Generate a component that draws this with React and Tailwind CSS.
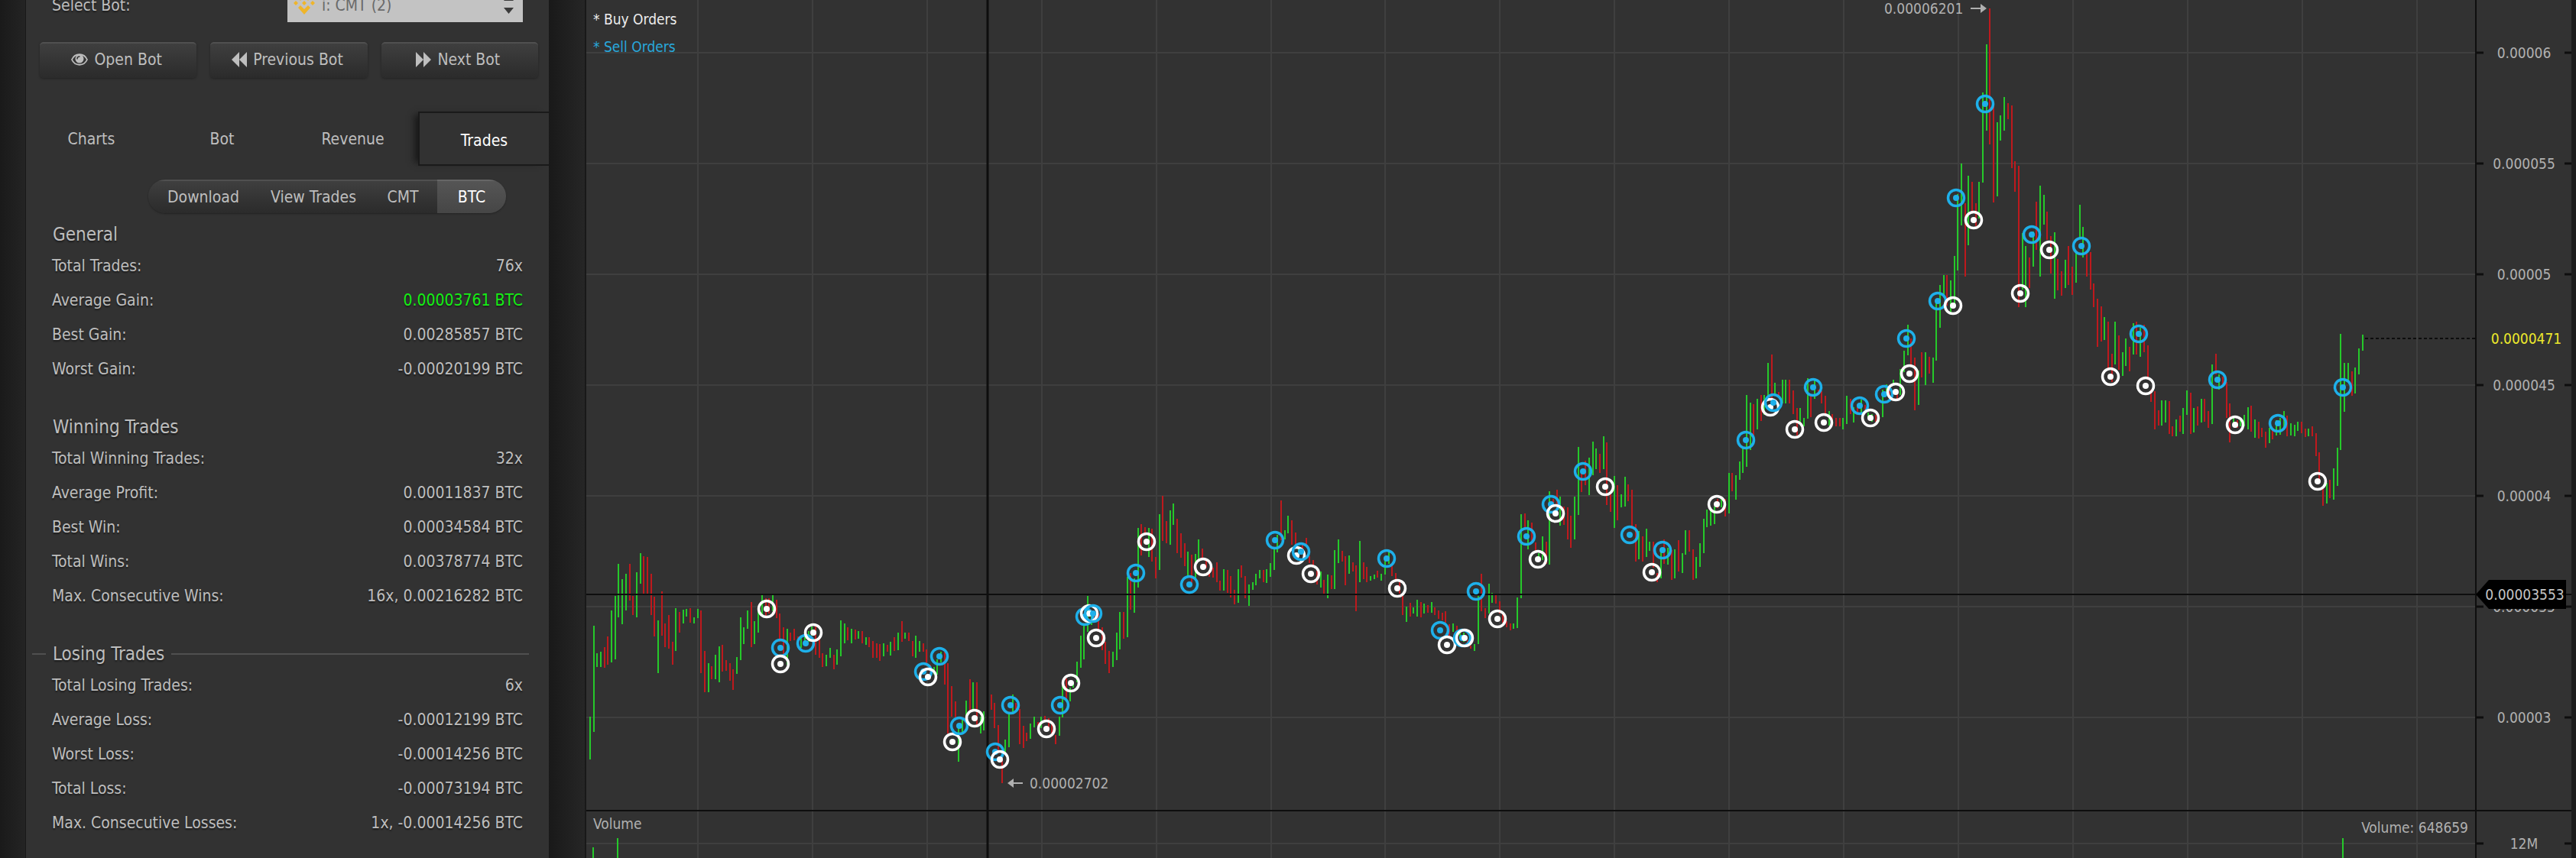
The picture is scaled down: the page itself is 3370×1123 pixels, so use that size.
// src/pages/BotTradesPage.jsx
import { useState } from 'react'

// ─── Sidebar data ─────────────────────────────────────────────────────────────
const TABS = ['Charts', 'Bot', 'Revenue', 'Trades']

const STATS = [
  {
    title: 'General',
    rows: [
      ['Total Trades:', '76x'],
      ['Average Gain:', '0.00003761 BTC', true],
      ['Best Gain:', '0.00285857 BTC'],
      ['Worst Gain:', '-0.00020199 BTC'],
    ],
  },
  {
    title: 'Winning Trades',
    rows: [
      ['Total Winning Trades:', '32x'],
      ['Average Profit:', '0.00011837 BTC'],
      ['Best Win:', '0.00034584 BTC'],
      ['Total Wins:', '0.00378774 BTC'],
      ['Max. Consecutive Wins:', '16x, 0.00216282 BTC'],
    ],
  },
  {
    title: 'Losing Trades',
    ruled: true,
    rows: [
      ['Total Losing Trades:', '6x'],
      ['Average Loss:', '-0.00012199 BTC'],
      ['Worst Loss:', '-0.00014256 BTC'],
      ['Total Loss:', '-0.00073194 BTC'],
      ['Max. Consecutive Losses:', '1x, -0.00014256 BTC'],
    ],
  },
]

// ─── Chart data ───────────────────────────────────────────────────────────────
// One entry per candle: g = up, r = down, then high-low. Ten candles per line.
const CANDLES = `
g938-994 g819-958 g855-873 g853-873 r847-874 r833-870 g799-867 g780-863 g738-808 g758-817
g751-799 r738-786 r780-805 g749-808 g724-764 r728-777 r729-778 r751-805 r781-833 g812-881
r774-832 r816-847 r805-849 r840-870 g796-852 r801-828 g798-816 g797-807 r796-815 g808-816
g797-809 r799-881 r852-906 g868-906 r872-889 g857-889 g846-893 r844-879 r864-878 r868-891
r876-903 g860-882 g808-864 g821-843 g799-823 r788-847 g813-843 g797-828 g779-807 r783-807
r783-803 g779-800 r785-809 r803-840 r821-860 g823-870 r828-839 r823-838 r833-843 g835-848
g833-845 g826-840 g820-832 r820-857 r837-861 r855-873 g857-872 g848-861 r857-876 g850-870
g812-859 g816-842 r821-838 g823-842 r824-837 g826-836 r826-842 g834-844 r834-847 r839-861
r842-861 r843-865 g842-859 r844-853 g840-858 r834-852 g828-851 r813-840 g828-836 r828-839
r839-859 g832-861 g839-853 r842-853 r850-870 r870-880 g873-883 g863-883 g853-867 r853-896
r868-960 r898-938 r918-942 g947-997 g942-960 g917-942 r889-930 g893-930 r893-950 g938-960
g931-956 g892-940 r909-929 r920-953 r949-983 r990-1025 g968-985 g933-978 g909-935 r920-928
r928-974 r950-979 r959-970 g947-967 g938-952 r945-950 g938-953 r937-943 r940-955 r948-960
r962-974 g938-963 g897-939 r888-917 g900-918 g893-900 g866-893 g832-874 g817-863 g780-827
g800-818 r800-807 r803-827 r821-851 r840-869 r852-881 g853-873 g828-864 g801-850 r801-836
g755-834 r750-798 g757-802 g691-769 r686-727 r690-700 g691-729 r692-735 r729-757 g673-746
r649-708 r682-711 g668-713 g659-687 r679-724 r698-730 r711-741 g722-753 r726-763 g725-760
g706-733 r718-730 r733-743 r747-755 r743-756 r736-762 r760-773 g745-773 r746-776 r754-782
r772-791 g745-789 r740-756 r754-783 g765-793 g762-772 g751-766 g746-757 r746-762 g745-763
g737-755 g718-746 g700-723 r655-707 g694-706 g675-698 r681-713 r697-717 g715-725 r712-722
r704-712 r728-737 r733-742 r747-765 g748-769 r759-779 g752-783 r753-771 g720-771 g706-737
r721-735 r728-766 g727-751 r736-748 r740-800 g708-762 r736-758 r742-762 g754-760 g752-758
r747-756 g751-760 g733-752 g722-738 r740-754 r750-760 r762-778 r780-805 g794-814 r789-807
g795-803 g785-807 r788-808 g790-803 r792-802 g788-802 r795-805 r799-810 r802-812 r800-815
r817-832 g816-827 r819-827 g828-834 g828-840 r838-844 r845-849 g843-852 g780-843 r751-800
r796-809 g764-803 g776-789 r777-790 r787-803 r803-815 r813-821 r816-825 g816-823 g782-822
g673-783 r672-690 g681-719 r684-710 r710-722 g724-730 g702-733 r709-738 g643-739 r653-663
r641-660 g650-688 r663-687 r664-706 r675-717 g650-706 g585-674 r617-644 r603-635 g599-648
g578-622 g587-614 r594-619 g571-614 r579-661 r647-670 g623-691 r635-681 g647-664 g624-663
r634-656 r641-690 r686-735 g695-732 r702-735 g692-729 g709-721 r709-743 r750-762 g720-757
r706-738 g717-739 r720-759 g719-757 r707-748 g724-750 g694-726 r694-722 r719-759 g729-757
g711-742 g679-724 g667-690 g667-688 g663-686 r653-665 g650-664 r653-676 g619-672 r619-643
g622-654 g604-628 g587-619 g517-611 g527-589 r529-570 g522-562 r517-551 g517-543 g475-520
r464-522 g501-517 r513-520 g497-528 g497-528 r497-528 r511-542 r534-570 g534-552 g547-558
g495-548 r517-546 g498-522 r510-516 r512-528 r518-542 g538-557 r542-557 r547-558 r547-558
g547-562 g518-555 r522-542 g533-553 r533-540 g523-543 r530-538 g540-546 g542-552 r543-552
g547-552 g510-546 g503-517 r508-518 g497-503 r513-525 g483-517 g459-487 g425-465 r443-480
r468-537 g485-530 r461-494 g461-504 r467-489 g468-501 g393-472 g373-429 g360-389 r360-400
g367-412 g335-400 g254-354 g214-295 r266-362 g230-321 r238-279 r266-296 g238-286 g121-239
g58-171 r11-189 r136-265 g160-257 g151-184 g127-171 r135-156 r138-220 r211-251 r217-402
g305-379 g322-402 r337-377 g303-349 r264-327 g243-362 g255-294 r277-314 r309-358 g304-391
r339-380 r355-387 g340-377 r322-373 r349-386 g329-370 g268-311 g297-337 r332-362 r330-379
r371-402 r391-454 r401-447 g415-445 r421-482 r463-500 g421-477 r439-484 g461-492 g443-479
r454-486 g423-464 r421-464 g429-467 r425-461 r452-497 r510-526 r512-562 r537-557 g524-557
g524-553 r525-568 r558-571 g549-571 r544-565 g534-568 g511-543 r514-568 g534-566 r532-557
g522-553 r522-552 r538-560 g477-555 r463-490 g490-510 r493-507 r500-547 r528-579 g547-553
r550-560 g548-558 g543-558 g533-562 r531-565 g549-573 r552-574 r560-572 r565-586 g560-580
r560-575 g550-570 g547-569 g538-560 r544-571 g554-570 g556-571 g552-564 r552-567 r561-572
g561-571 r558-571 r567-597 r592-630 r638-662 g632-659 r628-652 g613-654 g586-636 g437-589
g475-539 g475-500 r486-518 g481-515 g456-490 g438-459
`.trim().split(/\s+/).map((s) => {
  const [high, low] = s.slice(1).split('-').map(Number)
  return { up: s[0] === 'g', high, low }
})

// b = buy order, s = sell order
const ORDERS = [
  ['b', 1003, 797], ['s', 1021, 848], ['b', 1021, 869], ['s', 1054, 842], ['b', 1064, 828],
  ['s', 1208, 879], ['b', 1214, 886], ['s', 1229, 859], ['b', 1246, 971], ['s', 1255, 950],
  ['b', 1275, 940], ['s', 1302, 984], ['b', 1308, 994], ['s', 1322, 923], ['b', 1369, 954],
  ['s', 1387, 923], ['b', 1401, 894], ['s', 1419, 807], ['b', 1425, 803], ['s', 1430, 803],
  ['b', 1434, 835], ['s', 1486, 750], ['b', 1500, 709], ['s', 1556, 765], ['b', 1574, 742],
  ['s', 1668, 707], ['b', 1696, 727], ['s', 1702, 722], ['b', 1715, 751], ['s', 1814, 731],
  ['b', 1828, 770], ['s', 1884, 825], ['b', 1893, 844], ['s', 1913, 835], ['b', 1916, 835],
  ['s', 1931, 774], ['b', 1959, 810], ['s', 1997, 702], ['b', 2012, 732], ['s', 2029, 660],
  ['b', 2035, 672], ['s', 2071, 617], ['b', 2100, 637], ['s', 2132, 700], ['b', 2161, 749],
  ['s', 2175, 720], ['b', 2246, 660], ['s', 2284, 576], ['b', 2316, 533], ['s', 2320, 527],
  ['b', 2348, 562], ['s', 2372, 507], ['b', 2386, 553], ['s', 2433, 531], ['b', 2447, 547],
  ['s', 2465, 516], ['b', 2480, 513], ['s', 2494, 443], ['b', 2498, 489], ['s', 2535, 394],
  ['b', 2555, 400], ['s', 2559, 259], ['b', 2582, 288], ['s', 2597, 136], ['b', 2643, 384],
  ['s', 2658, 307], ['b', 2681, 327], ['s', 2723, 322], ['b', 2761, 493], ['s', 2798, 437],
  ['b', 2807, 505], ['s', 2901, 497], ['b', 2924, 556], ['s', 2980, 554], ['b', 3032, 630],
  ['s', 3065, 507],
]

const PRICE_TICKS = [
  ['0.00006', 69],
  ['0.000055', 214],
  ['0.00005', 359],
  ['0.000045', 504],
  ['0.00004', 649],
  ['0.000035', 794],
  ['0.00003', 939],
  ['12M', 1104],
]

const VOLUME_BARS = [[776, 1109], [808, 1097], [3065, 1097]]

// ─── Chart scale ──────────────────────────────────────────────────────────────
const PLOT_LEFT = 767
const PLOT_RIGHT = 3239
const AXIS_RIGHT = 3364
const HEIGHT = 1123
const FIRST_CANDLE = 772
const CANDLE_STEP = 4.684
const GRID_X = Array.from({ length: 16 }, (_, i) => Math.round(913 + i * 149.9))
const CURSOR = { x: 1292, y: 778 }

export default function BotTradesPage() {
  return (
    <div className="flex min-h-screen items-stretch overflow-hidden bg-[#1e1e1e] font-['DejaVu_Sans_Condensed','Noto_Sans',sans-serif] text-[21px] leading-[28px] text-[#bebebe]">
      <div className="w-[34px] shrink-0 border-r border-[#191919] bg-linear-to-r from-[#1a1a1a] to-[#242424]" />
      <Sidebar />
      <div className="w-[49px] shrink-0 border-r-2 border-[#191919] bg-linear-to-r from-[#191919] to-[#262626]" />
      <main className="min-w-0 flex-1 bg-[#323232]">
        <PriceChart />
      </main>
      <div className="w-[6px] shrink-0 bg-[#1c1c1c]" />
    </div>
  )
}

// ── Sidebar ───────────────────────────────────────────────────────────────────

function Sidebar() {
  const [tab, setTab] = useState('Trades')
  const [currency, setCurrency] = useState('BTC')

  return (
    <aside className="w-[684px] shrink-0 overflow-hidden bg-[#323232] pb-6 [text-shadow:0_2px_2px_rgba(0,0,0,0.45)]">
      {/* ── Bot picker, scrolled partly out of view ── */}
      <div className="-mt-[15px] flex h-[44px] items-center justify-between px-[34px]">
        <label htmlFor="bot">Select Bot:</label>
        <div className="relative">
          <select
            id="bot"
            className="h-[44px] w-[308px] appearance-none bg-[#c3c3c3] pl-[45px] text-[#6a6a6a]"
          >
            <option>i: CMT (2)</option>
          </select>
          <BinanceIcon />
          <svg className="pointer-events-none absolute top-[8px] right-[12px] h-[26px] w-[13px]" viewBox="0 0 13 26">
            <path d="M0 8 6.500 0 13 8ZM0 17h13L6.500 25Z" fill="#3a3a3a" />
          </svg>
        </div>
      </div>

      <div className="mt-[26px] grid grid-cols-3 gap-[18px] pr-[14px] pl-[18px]">
        <BotButton icon={<EyeIcon />}>Open Bot</BotButton>
        <BotButton icon={<RewindIcon />}>Previous Bot</BotButton>
        <BotButton icon={<ForwardIcon />}>Next Bot</BotButton>
      </div>

      {/* ── Tabs ── */}
      <div role="tablist" className="mt-[44px] grid h-[71px] grid-cols-4">
        {TABS.map((name) => (
          <button
            key={name}
            role="tab"
            aria-selected={tab === name}
            onClick={() => setTab(name)}
            className={
              tab === name
                ? 'border-y-2 border-l-2 border-[#1a1a1a] pt-1 text-white shadow-[-9px_0_8px_-4px_#1a1a1a]'
                : ''
            }
          >
            {name}
          </button>
        ))}
      </div>

      <div className="mt-[18px] flex justify-end pr-[56px]">
        <div className="flex h-[44px] overflow-hidden rounded-full shadow-[0_1px_2px_#222]">
          <PillButton width="w-[144px]">Download</PillButton>
          <PillButton width="w-[144px]">View Trades</PillButton>
          <PillButton width="w-[90px]" active={currency === 'CMT'} onClick={() => setCurrency('CMT')}>
            CMT
          </PillButton>
          <PillButton width="w-[90px]" active={currency === 'BTC'} onClick={() => setCurrency('BTC')}>
            BTC
          </PillButton>
        </div>
      </div>

      <div className="mt-[10px] flex flex-col gap-[36px]">
        {STATS.map((group) => (
          <StatGroup key={group.title} {...group} />
        ))}
      </div>
    </aside>
  )
}

function BotButton({ icon, children }) {
  return (
    <button className="flex h-[47px] items-center justify-center gap-2 rounded-[5px] border-t-2 border-[#505050] bg-linear-to-b from-[#3f3f3f] to-[#2b2b2b] pr-1 pb-1 shadow-[0_1px_3px_#222]">
      {icon}
      {children}
    </button>
  )
}

function PillButton({ width, active, onClick, children }) {
  const look = active
    ? 'border-[#666] bg-linear-to-b from-[#555] to-[#464646] text-white'
    : 'border-[#505050] bg-linear-to-b from-[#3f3f3f] to-[#2b2b2b]'
  return (
    <button onClick={onClick} className={`border-t-2 ${width} ${look}`}>
      {children}
    </button>
  )
}

function StatGroup({ title, rows, ruled }) {
  const rule = ruled ? 'bg-[#505050]' : ''
  return (
    <section>
      <div className="flex h-[36px] items-center gap-[9px] pr-[26px] pl-[8px]">
        <div className={`h-[2px] w-[18px] ${rule}`} />
        <h2 className="text-[24px]">{title}</h2>
        <div className={`h-[2px] flex-1 ${rule}`} />
      </div>
      <div className="px-[34px]">
        <table className="w-full">
          <tbody>
            {rows.map(([label, value, gain]) => (
              <tr key={label} className="h-[45px]">
                <th scope="row" className="text-left font-normal">{label}</th>
                <td className={gain ? 'text-right text-[#14ee14]' : 'text-right'}>{value}</td>
              </tr>
            ))}
          </tbody>
        </table>
      </div>
    </section>
  )
}

// ── Chart ─────────────────────────────────────────────────────────────────────

function PriceChart() {
  return (
    <svg
      className="block w-full text-[19px]"
      viewBox={`${PLOT_LEFT} 0 ${AXIS_RIGHT - PLOT_LEFT} ${HEIGHT}`}
      fill="#b0b0b0"
    >
      {/* grid */}
      <g stroke="#3f3f3f" strokeWidth="2">
        {GRID_X.map((x) => <line key={x} x1={x} x2={x} y1="0" y2={HEIGHT} />)}
        {PRICE_TICKS.map(([label, y]) => <line key={label} x1={PLOT_LEFT} x2={PLOT_RIGHT} y1={y} y2={y} />)}
      </g>

      <text x="776" y="32" fill="#ececec">* Buy Orders</text>
      <text x="776" y="68" fill="#28a8dc">* Sell Orders</text>

      {/* candles */}
      <g strokeWidth="2">
        {CANDLES.map((c, i) => {
          const x = Math.round(FIRST_CANDLE + i * CANDLE_STEP)
          return <line key={i} x1={x} x2={x} y1={c.high} y2={c.low} stroke={c.up ? '#25c92a' : '#be191d'} />
        })}
        {VOLUME_BARS.map(([x, top]) => (
          <line key={x} x1={x} x2={x} y1={top} y2={HEIGHT} stroke="#25c92a" />
        ))}
      </g>

      {/* last price */}
      <line x1="3094" x2={PLOT_RIGHT} y1="443" y2="443" stroke="#0d0d0d" strokeWidth="2" strokeDasharray="4 3" />

      {/* frame and cursor */}
      <g stroke="#0e0e0e" strokeWidth="2">
        <line x1={PLOT_LEFT} x2={AXIS_RIGHT} y1="1061" y2="1061" />
        <line x1={PLOT_RIGHT} x2={PLOT_RIGHT} y1="0" y2={HEIGHT} />
        <line x1={PLOT_LEFT} x2={AXIS_RIGHT} y1={CURSOR.y} y2={CURSOR.y} />
        <line x1={CURSOR.x} x2={CURSOR.x} y1="0" y2={HEIGHT} strokeWidth="3" />
      </g>

      {/* orders */}
      {ORDERS.map(([kind, x, y]) => {
        const color = kind === 'b' ? '#fff' : '#1eb0ea'
        return (
          <g key={`${x}-${y}`}>
            <circle cx={x} cy={y} r="10.500" fill="none" stroke={color} strokeWidth="3.500" />
            <circle cx={x} cy={y} r="4" fill={color} />
          </g>
        )
      })}

      {/* high and low of the range */}
      <text x="2465" y="18">0.00006201</text>
      <path d="M2578 10h13v-5l8 6-8 6v-5h-13Z" />
      <text x="1347" y="1032">0.00002702</text>
      <path d="M1338 1024h-12v-5l-8 6 8 6v-5h12Z" />

      <text x="776" y="1085">Volume</text>
      <text x="3229" y="1090" textAnchor="end">Volume: 648659</text>

      {/* price axis */}
      {PRICE_TICKS.map(([label, y]) => (
        <g key={label}>
          <path d={`M${PLOT_RIGHT} ${y}h10M3355 ${y}h9`} stroke="#0e0e0e" strokeWidth="3" />
          <text x="3302" y={y + 7} textAnchor="middle">{label}</text>
        </g>
      ))}
      <text x="3305" y="450" textAnchor="middle" fill="#ece82c">0.0000471</text>
      <path d="M3239 778 3256 759H3357V797H3256Z" fill="#000" />
      <text x="3303" y="785" textAnchor="middle" fill="#c4c4c4">0.00003553</text>
    </svg>
  )
}

// ── Icons ─────────────────────────────────────────────────────────────────────

function EyeIcon() {
  return (
    <svg className="h-[16px] w-[22px]" viewBox="0 0 22 16" fill="none" aria-hidden="true">
      <path d="M1 8C5-1 17-1 21 8 17 17 5 17 1 8Z" stroke="currentColor" strokeWidth="1.800" />
      <circle cx="11" cy="7" r="5.500" fill="currentColor" />
      <path d="M8 7a3 3 0 0 1 3-3" stroke="#353535" strokeWidth="1.500" strokeLinecap="round" />
    </svg>
  )
}

function RewindIcon() {
  return (
    <svg className="h-[20px] w-[20px]" viewBox="0 0 20 20" fill="currentColor" aria-hidden="true">
      <path d="M10 0V20L0 10ZM20 0V20L10 10Z" />
    </svg>
  )
}

function ForwardIcon() {
  return (
    <svg className="h-[20px] w-[20px]" viewBox="0 0 20 20" fill="currentColor" aria-hidden="true">
      <path d="M0 0V20L10 10ZM10 0V20L20 10Z" />
    </svg>
  )
}

function BinanceIcon() {
  return (
    <svg className="pointer-events-none absolute top-[4px] left-[8px] h-[30px] w-[28px]" viewBox="0 0 28 30" fill="#efb52a" aria-hidden="true">
      <path d="m14 0 8 9-3 3-5-5-5 5-3-3ZM14 30l-8-9 3-3 5 5 5-5 3 3ZM3 12l3 3-3 3-3-3ZM25 12l3 3-3 3-3-3ZM14 12l3 3-3 3-3-3Z" />
    </svg>
  )
}
